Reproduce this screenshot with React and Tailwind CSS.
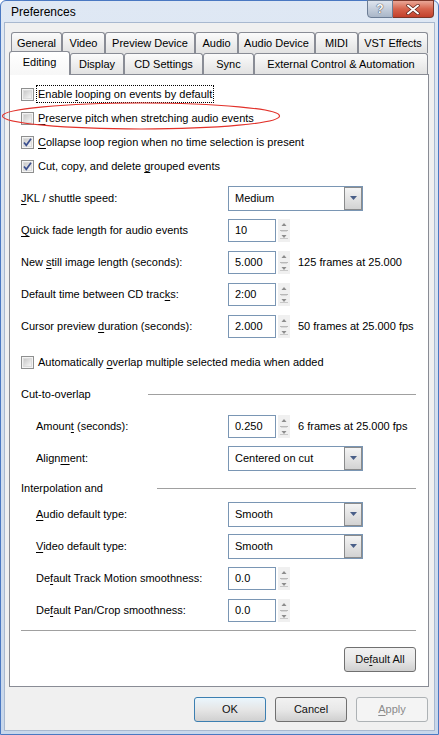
import React from "react";

const font = "font-['Liberation_Sans',Arial,sans-serif]";

const U = ({ children }) => <span className="underline underline-offset-2">{children}</span>;

const Check = ({ checked }) => (
  <span className="relative w-[13px] h-[13px] border border-[#8e8f8f] bg-[#f4f4f4] flex items-center justify-center shrink-0">
    <span className="w-[9px] h-[9px] bg-gradient-to-br from-[#c9c9c9] to-[#f6f6f6] border border-[#dcdcdc]" />
    {checked && (
      <svg className="absolute left-0 top-0" width="11" height="11" viewBox="0 0 11 11">
        <path d="M2 5.5 L4.3 8.3 L9 1.8" fill="none" stroke="#3b4f8e" strokeWidth="1.7" />
      </svg>
    )}
  </span>
);

const CheckRow = ({ checked, focus, children }) => (
  <div className="h-[24px] flex items-center">
    <Check checked={checked} />
    <span className={`ml-[2px] px-[1px] leading-[16px] ${focus ? "border border-dotted border-black" : "border border-transparent"}`}>
      {children}
    </span>
  </div>
);

const SpinArrows = () => (
  <svg width="12" height="23" viewBox="0 0 12 23" className="ml-[2px] shrink-0">
    <rect x="0" y="0" width="12" height="23" fill="#f0f0f0" />
    <path d="M3.5 7 L6 4 L8.5 7 Z" fill="#8c8c8c" />
    <path d="M2 11.5 H10" stroke="#b8b8b8" />
    <path d="M3 12.5 H9" stroke="#d8d8d8" />
    <path d="M3.5 16 L6 19 L8.5 16 Z" fill="#8c8c8c" />
    <path d="M2 19.5 H10" stroke="#c8c8c8" />
  </svg>
);

const Spin = ({ value, note }) => (
  <div className="flex items-center">
    <div className="w-[48px] h-[23px] border border-[#7a96b4] bg-white flex items-center pl-[6px]">{value}</div>
    <SpinArrows />
    {note && <span className="ml-[8px]">{note}</span>}
  </div>
);

const Combo = ({ value }) => (
  <div className="w-[135px] h-[25px] border border-[#7a96b4] bg-white flex items-center">
    <span className="flex-1 pl-[6px]">{value}</span>
    <span className="w-[18px] h-[23px] border border-[#8a8b8c] bg-gradient-to-b from-[#f4f4f4] to-[#d3d3d3] flex items-center justify-center">
      <svg width="7" height="4" viewBox="0 0 7 4">
        <path d="M0 0 H7 L3.5 4 Z" fill="#4a5f88" />
      </svg>
    </span>
  </div>
);

const Row = ({ label, indent, children }) => (
  <div className="h-[32px] flex items-center">
    <div className={`w-[207px] shrink-0 ${indent ? "pl-[15px]" : ""}`}>{label}</div>
    {children}
  </div>
);

const Section = ({ title, width }) => (
  <div className="flex items-center">
    <span className="shrink-0" style={{ width }}>{title}</span>
    <span className="flex-1 h-px bg-[#a0a0a0]" />
  </div>
);

const Button = ({ children, focus, disabled, className = "" }) => (
  <div
    className={`w-[72px] h-[25px] rounded-[3px] border flex items-center justify-center ${
      disabled
        ? "border-[#adb2b5] bg-[#f4f4f4] text-[#8b8b8b]"
        : focus
        ? "border-[#3c7fb1] bg-gradient-to-b from-[#eaf6fd] via-[#e6e6e6] to-[#d0d0d0] text-[#111]"
        : "border-[#707070] bg-gradient-to-b from-[#f2f2f2] via-[#e8e8e8] to-[#cfcfcf] text-[#111]"
    } ${className}`}
  >
    {children}
  </div>
);

const Tab = ({ w, children, selected }) => (
  <div
    className={`shrink-0 border border-b-0 border-[#898c95] rounded-t-[3px] flex items-center justify-center ${
      selected
        ? "h-[24px] relative z-10 mb-[-1px] bg-gradient-to-b from-white to-[#f7f7f7] pb-[2px]"
        : "h-[21px] bg-gradient-to-b from-[#fbfbfb] to-[#e2e2e2]"
    }`}
    style={{ width: w }}
  >
    {children}
  </div>
);

export default function App() {
  return (
    <div className={`${font} relative w-[439px] h-[735px] text-[11px] text-black bg-white`}>
      <div className="w-full h-full flex flex-col border border-[#4a78c2] rounded-t-[6px] bg-gradient-to-b from-[#dfe8f4] to-[#c8d7eb] px-[3px] pb-[3px]">
        {/* title bar */}
        <div className="h-[21px] flex items-start shrink-0">
          <span className="ml-[7px] mt-[5px] text-[12px] leading-[12px]">Preferences</span>
          <div className="ml-auto mr-[1px] flex -mt-px">
            <div className="w-[26px] h-[18px] rounded-bl-[4px] border border-[#6c7d95] bg-gradient-to-b from-[#dfe5ee] to-[#a9b6c8] flex items-center justify-center text-white font-bold text-[12px] [text-shadow:0_0_1px_#334,0_0_1px_#334]">
              ?
            </div>
            <div className="w-[41px] h-[18px] rounded-br-[4px] border border-l-0 border-[#7a3528] bg-gradient-to-b from-[#e9a797] via-[#d6634c] to-[#c2402b] flex items-center justify-center">
              <svg width="14" height="11" viewBox="0 0 14 11">
                <path d="M2 1.5 L12 9.5 M12 1.5 L2 9.5" stroke="#5a231a" strokeWidth="3.4" strokeLinecap="round" />
                <path d="M2 1.5 L12 9.5 M12 1.5 L2 9.5" stroke="#ffffff" strokeWidth="2" strokeLinecap="round" />
              </svg>
            </div>
          </div>
        </div>

        {/* client */}
        <div className="flex-1 flex flex-col bg-[#f0f0f0] border border-[#a8b8cf] pl-[4px] pr-[5px] pt-[9px]">
          <div className="flex h-[21px] ml-[2px]">
            <Tab w={51}>General</Tab>
            <Tab w={43}>Video</Tab>
            <Tab w={90}>Preview Device</Tab>
            <Tab w={43}>Audio</Tab>
            <Tab w={77}>Audio Device</Tab>
            <Tab w={43}>MIDI</Tab>
            <Tab w={70}>VST Effects</Tab>
          </div>
          <div className="flex h-[21px] items-end">
            <Tab w={61} selected>Editing</Tab>
            <Tab w={54}>Display</Tab>
            <Tab w={79}>CD Settings</Tab>
            <Tab w={51}>Sync</Tab>
            <Tab w={174}>External Control &amp; Automation</Tab>
          </div>

          {/* panel */}
          <div className="border border-[#898c95] bg-white pl-[11px] pr-[12px] pt-[7px] pb-[14px] flex flex-col">
            <CheckRow focus>
              Enable <U>l</U>ooping on events by default
            </CheckRow>
            <CheckRow>
              <U>P</U>reserve pitch when stretching audio events
            </CheckRow>
            <CheckRow checked>
              <U>C</U>ollapse loop region when no time selection is present
            </CheckRow>
            <CheckRow checked>
              Cut, copy, and delete <U>g</U>rouped events
            </CheckRow>

            <div className="mt-[4px]">
              <Row label={<><U>J</U>KL / shuttle speed:</>}>
                <Combo value="Medium" />
              </Row>
              <Row label={<><U>Q</U>uick fade length for audio events</>}>
                <Spin value="10" />
              </Row>
              <Row label={<>New <U>s</U>till image length (seconds):</>}>
                <Spin value="5.000" note="125 frames at 25.000" />
              </Row>
              <Row label={<>Default time between CD trac<U>k</U>s:</>}>
                <Spin value="2:00" />
              </Row>
              <Row label={<>Cursor preview <U>d</U>uration (seconds):</>}>
                <Spin value="2.000" note="50 frames at 25.000 fps" />
              </Row>
            </div>

            <div className="mt-[8px]">
              <CheckRow>
                Automatically <U>o</U>verlap multiple selected media when added
              </CheckRow>
            </div>

            <div className="mt-[8px] h-[24px] flex items-center">
              <div className="w-full">
                <Section title="Cut-to-overlap" width={127} />
              </div>
            </div>
            <div className="mt-[4px]">
              <Row indent label={<>Amoun<U>t</U> (seconds):</>}>
                <Spin value="0.250" note="6 frames at 25.000 fps" />
              </Row>
              <Row indent label={<>Align<U>m</U>ent:</>}>
                <Combo value="Centered on cut" />
              </Row>
            </div>

            <div className="mt-[4px] h-[20px] flex items-center">
              <div className="w-full">
                <Section title="Interpolation and" width={136} />
              </div>
            </div>
            <Row indent label={<><U>A</U>udio default type:</>}>
              <Combo value="Smooth" />
            </Row>
            <Row indent label={<><U>V</U>ideo default type:</>}>
              <Combo value="Smooth" />
            </Row>
            <Row indent label={<>De<U>f</U>ault Track Motion smoothness:</>}>
              <Spin value="0.0" />
            </Row>
            <Row indent label={<>De<U>f</U>ault Pan/Crop smoothness:</>}>
              <Spin value="0.0" />
            </Row>

            <div className="mt-[4px] h-px bg-[#a0a0a0]" />
            <div className="mt-[16px] flex justify-end">
              <Button>
                De<U>f</U>ault All
              </Button>
            </div>
          </div>

          <div className="mt-[10px] flex justify-end gap-[9px] pr-[0px] mr-[1px]">
            <Button focus>OK</Button>
            <Button>Cancel</Button>
            <Button disabled>
              <U>A</U>pply
            </Button>
          </div>
        </div>
      </div>

      {/* red annotation ellipse */}
      <svg className="absolute left-0 top-[100px] pointer-events-none" width="290" height="32" viewBox="0 0 290 32">
        <ellipse cx="141" cy="16" rx="138.5" ry="13" fill="none" stroke="#e2322b" strokeWidth="1.2" />
      </svg>
    </div>
  );
}
